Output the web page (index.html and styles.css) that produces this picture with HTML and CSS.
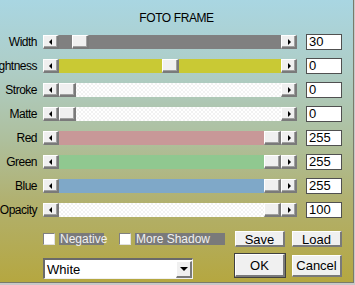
FILE: index.html
```html
<!DOCTYPE html>
<html lang="en">
<head>
  <meta charset="UTF-8">
  <title>Foto Frame</title>
  <link rel="stylesheet" href="styles.css">
</head>
<body>
<div class="window">
  <div class="title">FOTO FRAME</div>

  <!-- Slider rows -->
  <div class="rows">
    <div class="row">
      <div class="label">Width</div>
      <div class="slider">
        <span class="arrow-btn left"></span>
        <div class="track gray"><span class="thumb" style="margin-left: 13px"></span></div>
        <span class="arrow-btn right"></span>
      </div>
      <div class="value">30</div>
    </div>
    <div class="row">
      <div class="label">Brightness</div>
      <div class="slider">
        <span class="arrow-btn left"></span>
        <div class="track yellow"><span class="thumb" style="margin-left: 103px"></span></div>
        <span class="arrow-btn right"></span>
      </div>
      <div class="value">0</div>
    </div>
    <div class="row">
      <div class="label">Stroke</div>
      <div class="slider">
        <span class="arrow-btn left"></span>
        <div class="track checker"><span class="thumb" style="margin-left: 0px"></span></div>
        <span class="arrow-btn right"></span>
      </div>
      <div class="value">0</div>
    </div>
    <div class="row">
      <div class="label">Matte</div>
      <div class="slider">
        <span class="arrow-btn left"></span>
        <div class="track checker"><span class="thumb" style="margin-left: 0px"></span></div>
        <span class="arrow-btn right"></span>
      </div>
      <div class="value">0</div>
    </div>
    <div class="row">
      <div class="label">Red</div>
      <div class="slider">
        <span class="arrow-btn left"></span>
        <div class="track red"><span class="thumb" style="margin-left: 205px"></span></div>
        <span class="arrow-btn right"></span>
      </div>
      <div class="value">255</div>
    </div>
    <div class="row">
      <div class="label">Green</div>
      <div class="slider">
        <span class="arrow-btn left"></span>
        <div class="track green"><span class="thumb" style="margin-left: 205px"></span></div>
        <span class="arrow-btn right"></span>
      </div>
      <div class="value">255</div>
    </div>
    <div class="row">
      <div class="label">Blue</div>
      <div class="slider">
        <span class="arrow-btn left"></span>
        <div class="track blue"><span class="thumb" style="margin-left: 205px"></span></div>
        <span class="arrow-btn right"></span>
      </div>
      <div class="value">255</div>
    </div>
    <div class="row">
      <div class="label">Opacity</div>
      <div class="slider">
        <span class="arrow-btn left"></span>
        <div class="track checker"><span class="thumb" style="margin-left: 205px"></span></div>
        <span class="arrow-btn right"></span>
      </div>
      <div class="value">100</div>
    </div>
  </div>

  <!-- Options and buttons -->
  <div class="bottom">
    <div class="options">
      <div class="checks">
        <span class="check"><span class="box"></span><span class="check-text">Negative</span></span>
        <span class="check"><span class="box"></span><span class="check-text wide">More Shadow</span></span>
      </div>
      <div class="select">
        <span class="select-text">White</span>
        <span class="select-btn"></span>
      </div>
    </div>
    <div class="buttons">
      <button class="btn">Save</button>
      <button class="btn">Load</button>
      <button class="btn default">OK</button>
      <button class="btn cancel">Cancel</button>
    </div>
  </div>
</div>
</body>
</html>
```

FILE: styles.css
```css
html {
  background-color: #c8c8c8;
}
body {
  margin: 0;
  width: 355px;
  height: 285px;
  overflow: hidden;
  font-family: "Liberation Sans", Arial, sans-serif;
  font-size: 12px;
  color: #000;
}
/* Dialog body with its blue-to-olive gradient */
.window {
  width: 353px;
  height: 282px;
  border-right: 1px solid #7a7a6a;
  border-bottom: 1px solid #7a7a6a;
  background: linear-gradient(#a9d6e2 0%, #aecdc6 25%, #aebf9c 50%, #b1b06e 72%, #b5a740 100%);
  overflow: hidden;
}
.title {
  height: 30px;
  line-height: 36px;
  text-align: center;
  font-size: 12px;
  letter-spacing: -0.4px;
}
/* Slider rows */
.row {
  display: grid;
  grid-template-columns: 37px 254px 36px;
  column-gap: 6px;
  height: 24px;
  align-items: center;
}
.row .value {
  margin-left: 3px;
}
.label {
  display: flex;
  justify-content: flex-end;
  white-space: nowrap;
  letter-spacing: -0.5px;
}
.slider {
  display: flex;
  height: 14px;
}
.arrow-btn,
.thumb {
  box-sizing: border-box;
  height: 14px;
  background-color: #f0f0f0;
  border-top: 1px solid #fff;
  border-left: 1px solid #fff;
  border-right: 2px solid #7a7a7a;
  border-bottom: 2px solid #7a7a7a;
  box-shadow: inset -1px -1px 0 #a0a0a0;
}
.arrow-btn {
  width: 16px;
  flex: none;
  position: relative;
}
.arrow-btn::after {
  content: "";
  position: absolute;
  top: 3px;
  width: 0;
  height: 0;
  border-top: 3px solid transparent;
  border-bottom: 3px solid transparent;
}
.arrow-btn.left::after {
  left: 5px;
  border-right: 3px solid #000;
}
.arrow-btn.right::after {
  left: 6px;
  border-left: 3px solid #000;
}
.track {
  flex: 1;
  display: flex;
}
.thumb {
  display: block;
  width: 17px;
}
.track.gray { background-color: #808080; }
.track.yellow { background-color: #c9c934; }
.track.red { background-color: #c89898; }
.track.green { background-color: #90c890; }
.track.blue { background-color: #7fa8c8; }
.track.checker {
  background: repeating-conic-gradient(#ffffff 0 25%, #f2f2f2 0 50%) 0 0 / 4px 4px;
}
.value {
  box-sizing: border-box;
  height: 16px;
  width: 36px;
  background-color: #fff;
  border: 1px solid #505050;
  line-height: 14px;
  padding-left: 2px;
  font-size: 13px;
}
/* Bottom options */
.bottom {
  display: flex;
  padding-left: 43px;
  margin-top: 10px;
}
.options {
  width: 192px;
}
.checks {
  display: flex;
  gap: 15px;
  height: 22px;
  padding-top: 1px;
}
.check {
  display: flex;
  gap: 4px;
  height: 12px;
}
.box {
  box-sizing: border-box;
  width: 12px;
  height: 12px;
  background-color: #fff;
  border-top: 1px solid #808080;
  border-left: 1px solid #808080;
  border-right: 1px solid #e0e0e0;
  border-bottom: 1px solid #e0e0e0;
}
.check-text {
  width: 44px;
  background-color: #7a7a7a;
  color: #f0f0f0;
  line-height: 12px;
  padding-left: 1px;
}
.check-text.wide {
  width: 89px;
}
.select {
  box-sizing: border-box;
  display: flex;
  align-items: center;
  width: 150px;
  height: 21px;
  margin-top: 3px;
  background-color: #fff;
  border-top: 2px solid #6a6a6a;
  border-left: 2px solid #6a6a6a;
  border-right: 1px solid #f0f0f0;
  border-bottom: 1px solid #f0f0f0;
}
.select-text {
  flex: 1;
  padding-left: 2px;
  font-size: 13px;
}
.select-btn {
  box-sizing: border-box;
  position: relative;
  width: 16px;
  height: 17px;
  background-color: #f0f0f0;
  border-top: 1px solid #fff;
  border-left: 1px solid #fff;
  border-right: 2px solid #7a7a7a;
  border-bottom: 2px solid #7a7a7a;
}
.select-btn::after {
  content: "";
  position: absolute;
  left: 3px;
  top: 5px;
  border-left: 4px solid transparent;
  border-right: 4px solid transparent;
  border-top: 4px solid #000;
}
/* Push buttons */
.buttons {
  display: grid;
  grid-template-columns: 50px 50px;
  grid-template-rows: 16px 24px;
  column-gap: 7px;
  row-gap: 6px;
  margin-top: -1px;
}
.btn {
  box-sizing: border-box;
  font-family: "Liberation Sans", Arial, sans-serif;
  font-size: 13px;
  padding: 0;
  color: #000;
  background-color: #f0f0f0;
  border-top: 1px solid #fff;
  border-left: 1px solid #fff;
  border-right: 2px solid #7a7a7a;
  border-bottom: 2px solid #7a7a7a;
}
.btn.default {
  outline: 1px solid #404040;
  outline-offset: 0;
  height: 23px;
  margin-top: 1px;
}
.btn.cancel {
  height: 22px;
  margin-top: 2px;
}
```
